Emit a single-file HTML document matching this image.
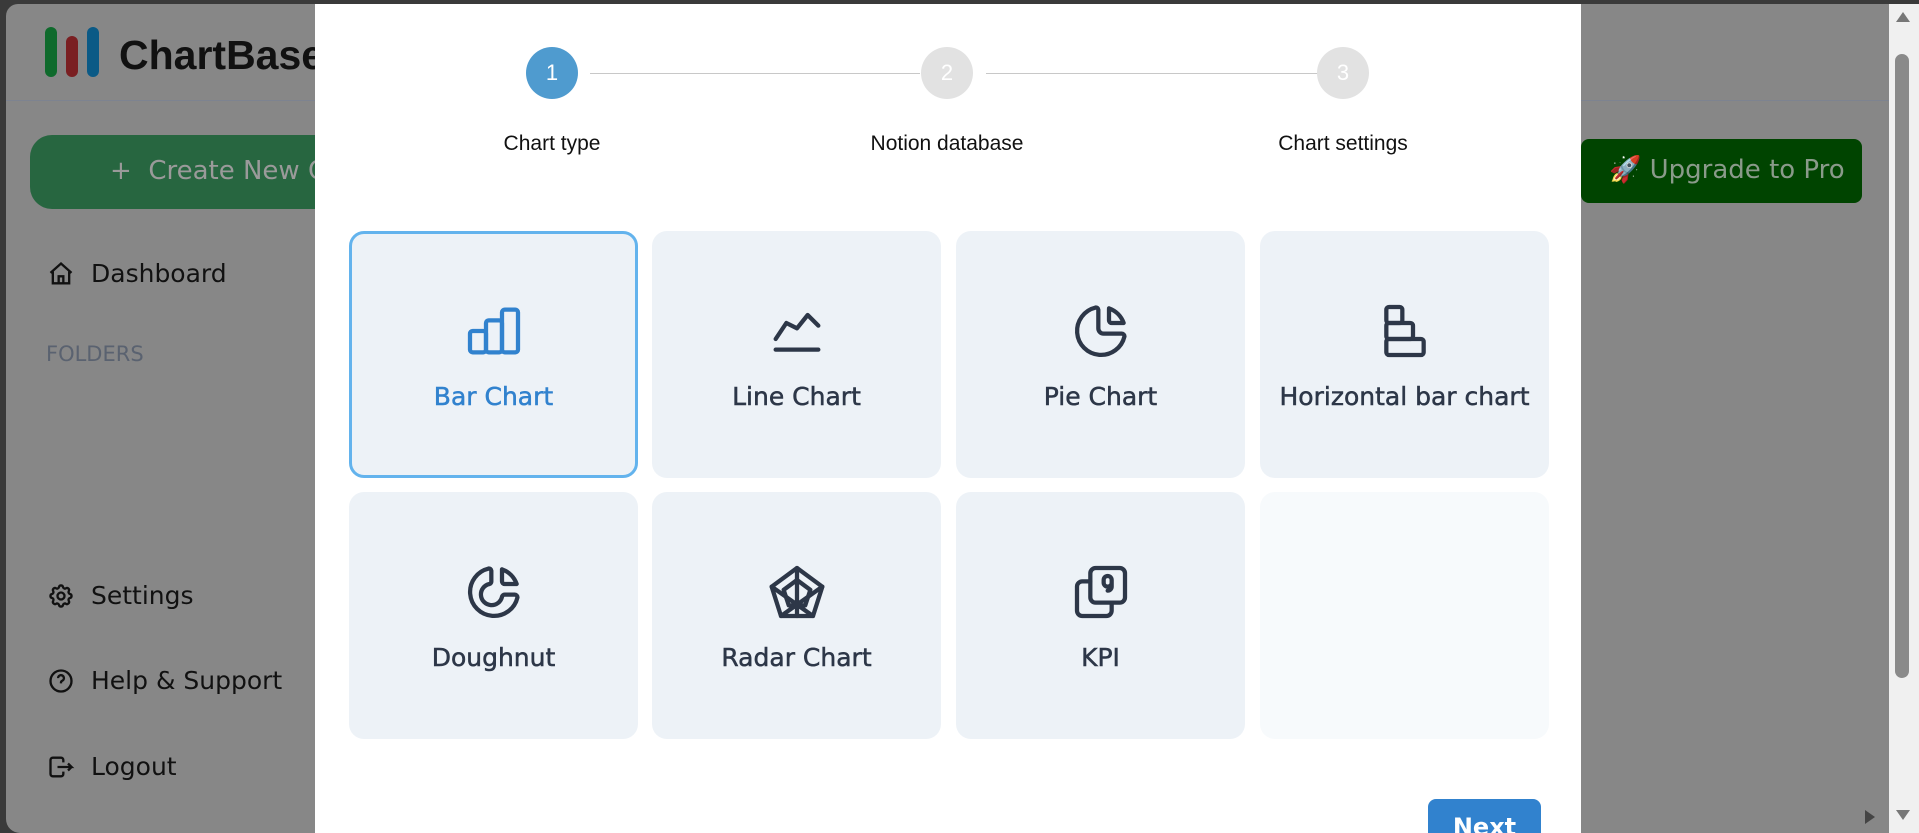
<!DOCTYPE html>
<html><head><meta charset="utf-8"><style>
*{box-sizing:border-box;margin:0;padding:0}
html,body{width:1919px;height:833px;overflow:hidden}
body{background:#3a3a3a;font-family:"Liberation Sans",sans-serif;position:relative}
.win{position:absolute;left:6px;top:4px;width:1883px;height:829px;background:#878787;border-radius:12px 0 0 14px;overflow:hidden}
.abs{position:absolute}
.side{font-family:"DejaVu Sans","Liberation Sans",sans-serif;color:#111;white-space:nowrap}
.nav{position:absolute;left:41px;display:flex;align-items:center;font-size:25px;color:#111}
.nav svg{margin-right:16px}
.modal{position:absolute;left:315px;top:4px;width:1266px;height:829px;background:#fff;overflow:hidden}
.step{position:absolute;width:52px;height:52px;border-radius:50%;color:#fff;font-size:22px;display:flex;align-items:center;justify-content:center}
.lbl{position:absolute;font-size:21px;color:#111;transform:translateX(-50%);white-space:nowrap}
.line{position:absolute;height:1px;background:#c8c8c8;top:69px}
.card{position:absolute;width:289px;height:247px;background:#edf2f7;border-radius:15px;display:flex;flex-direction:column;align-items:center;justify-content:center;color:#2d3748;font-family:"DejaVu Sans","Liberation Sans",sans-serif;font-size:25px;-webkit-text-stroke:0.5px currentColor;white-space:nowrap}
.card svg{width:64px;height:64px;margin-bottom:19px;margin-top:0px}
.sb{position:absolute;left:1889px;top:4px;width:30px;height:829px;background:#f0f0f0}
</style></head><body>
<div class="win">
  <div class="abs" style="left:39px;top:23px;width:12px;height:50px;border-radius:6px;background:#0f6a2c"></div>
  <div class="abs" style="left:60px;top:32px;width:12px;height:41px;border-radius:6px;background:#7a1f22"></div>
  <div class="abs" style="left:81px;top:23px;width:12px;height:50px;border-radius:6px;background:#0b5a86"></div>
  <div class="abs" style="left:113px;top:28px;font-size:41px;font-weight:bold;color:#111;font-family:'Liberation Sans',sans-serif">ChartBase</div>
  <div class="abs" style="left:0;top:96px;width:1883px;height:1px;background:#7d8390"></div>
  <div class="abs side" style="left:24px;top:131px;width:320px;height:74px;border-radius:22px;background:#276640;color:#9a9a9a;font-size:26px;padding:21px 0 0 80px">+&nbsp; Create New Chart</div>
  <div class="abs side" style="left:1575px;top:135px;width:281px;height:64px;border-radius:8px;background:#004400;color:#8a9a8a;font-size:26px;padding:16px 0 0 28px">🚀 Upgrade to Pro</div>
  <div class="nav side" style="top:255px"><svg width="28" height="28" viewBox="0 0 24 24" fill="none" stroke="#111" stroke-width="2"><path d="M3 11 12 3l9 8M5 10v10h14V10M10 20v-6h4v6"/></svg>Dashboard</div>
  <div class="abs side" style="left:40px;top:338px;font-size:21px;color:#5a6270">FOLDERS</div>
  <div class="nav side" style="top:577px"><svg width="28" height="28" viewBox="0 0 24 24" fill="none" stroke="#111" stroke-width="2"><circle cx="12" cy="12" r="3"/><path d="M10.3 4.3c.4-1.8 3-1.8 3.4 0a1.7 1.7 0 0 0 2.6 1.1c1.5-.9 3.3.8 2.4 2.4a1.7 1.7 0 0 0 1 2.5c1.8.4 1.8 3 0 3.4a1.7 1.7 0 0 0-1 2.6c.9 1.5-.9 3.3-2.4 2.4a1.7 1.7 0 0 0-2.6 1c-.4 1.8-3 1.8-3.4 0a1.7 1.7 0 0 0-2.6-1c-1.5.9-3.3-.9-2.4-2.4a1.7 1.7 0 0 0-1-2.6c-1.8-.4-1.8-3 0-3.4a1.7 1.7 0 0 0 1-2.5c-.9-1.6.9-3.3 2.4-2.4a1.7 1.7 0 0 0 2.6-1.1z"/></svg>Settings</div>
  <div class="nav side" style="top:662px"><svg width="28" height="28" viewBox="0 0 24 24" fill="none" stroke="#111" stroke-width="2"><circle cx="12" cy="12" r="9"/><path d="M9.5 9.5a2.5 2.5 0 1 1 3.5 2.3c-.6.3-1 .8-1 1.5v.7M12 17v.01"/></svg>Help &amp; Support</div>
  <div class="nav side" style="top:748px"><svg width="28" height="28" viewBox="0 0 24 24" fill="none" stroke="#111" stroke-width="2"><path d="M14 8V6a2 2 0 0 0-2-2H5a2 2 0 0 0-2 2v12a2 2 0 0 0 2 2h7a2 2 0 0 0 2-2v-2M9 12h12l-3-3m0 6 3-3"/></svg>Logout</div>
</div>
<div class="modal">
  <div class="line" style="left:275px;width:330px"></div>
  <div class="line" style="left:671px;width:333px"></div>
  <div class="step" style="left:211px;top:43px;background:#4f9bcf">1</div>
  <div class="step" style="left:606px;top:43px;background:#e2e2e2">2</div>
  <div class="step" style="left:1002px;top:43px;background:#e2e2e2">3</div>
  <div class="lbl" style="left:237px;top:128px">Chart type</div>
  <div class="lbl" style="left:632px;top:128px">Notion database</div>
  <div class="lbl" style="left:1028px;top:128px">Chart settings</div>

  <div class="card" style="left:34px;top:227px;border:3px solid #63b3ed;color:#3182ce"><svg viewBox="0 0 24 24" fill="none" stroke="#3182ce" stroke-width="1.6" stroke-linejoin="round"><rect x="3" y="12" width="6" height="8" rx="1"/><rect x="9" y="8" width="6" height="12" rx="1"/><rect x="15" y="4" width="6" height="16" rx="1"/></svg>Bar Chart</div>
  <div class="card" style="left:337px;top:227px"><svg viewBox="0 0 24 24" fill="none" stroke="#2d3748" stroke-width="1.6" stroke-linecap="round" stroke-linejoin="round"><path d="M4 19h16M4 15l4-6 4 2 4-5 4 4"/></svg>Line Chart</div>
  <div class="card" style="left:641px;top:227px"><svg viewBox="0 0 24 24" fill="none" stroke="#2d3748" stroke-width="1.6" stroke-linecap="round" stroke-linejoin="round"><path d="M10 3.2A9 9 0 1 0 20.8 14a1 1 0 0 0-1-1H13a2 2 0 0 1-2-2V4a.9.9 0 0 0-1-.8"/><path d="M15 3.5A9 9 0 0 1 20.5 9H16a1 1 0 0 1-1-1V3.5"/></svg>Pie Chart</div>
  <div class="card" style="left:945px;top:227px"><svg viewBox="0 0 24 24" fill="none" stroke="#2d3748" stroke-width="1.6" stroke-linejoin="round"><rect x="5" y="3" width="6" height="6" rx="1"/><rect x="5" y="9" width="10" height="6" rx="1"/><rect x="5" y="15" width="14" height="6" rx="1"/></svg>Horizontal bar chart</div>

  <div class="card" style="left:34px;top:488px"><svg viewBox="0 0 24 24" fill="none" stroke="#2d3748" stroke-width="1.6" stroke-linecap="round" stroke-linejoin="round"><path d="M10 3.2A9 9 0 1 0 20.8 14a1 1 0 0 0-1-1h-3.8a1 1 0 0 0-1 .8 4 4 0 1 1-4.7-4.8 1 1 0 0 0 .7-1V4a.9.9 0 0 0-1-.8"/><path d="M15 3.5A9 9 0 0 1 20.5 9H16a1 1 0 0 1-1-1V3.5"/></svg>Doughnut</div>
  <div class="card" style="left:337px;top:488px"><svg viewBox="0 0 24 24" fill="none" stroke="#2d3748" stroke-width="1.6" stroke-linecap="round" stroke-linejoin="round"><path d="M12 3l9.5 7-3.5 11H6L2.5 10z"/><path d="M12 7.5l5 3.7-1.9 5.8H8.9L7 11.2z"/><path d="M12 3v18M2.5 10l15.5 11M21.5 10L6 21"/></svg>Radar Chart</div>
  <div class="card" style="left:641px;top:488px"><svg viewBox="0 0 24 24" fill="none" stroke="#2d3748" stroke-width="1.6" stroke-linecap="round" stroke-linejoin="round"><rect x="8" y="3" width="13" height="13" rx="2"/><path d="M16 16v3a2 2 0 0 1-2 2H5a2 2 0 0 1-2-2v-9a2 2 0 0 1 2-2h3"/><path d="M14.5 11.5a1.5 1.5 0 0 0 1.5-1.5V7.5a1.5 1.5 0 0 0-3 0v1a1.5 1.5 0 0 0 3 0"/></svg>KPI</div>
  <div class="card" style="left:945px;top:488px;background:#f7fafc"></div>

  <div class="abs" style="left:1113px;top:795px;width:113px;height:50px;border-radius:8px;background:#3182ce;color:#fff;font-family:'DejaVu Sans',sans-serif;font-weight:bold;font-size:24px;text-align:center;padding-top:14px">Next</div>
</div>
<div class="sb">
  <div class="abs" style="left:6px;top:50px;width:14px;height:624px;border-radius:7px;background:#8a8a8a"></div>
  <div class="abs" style="left:7px;top:8px;width:0;height:0;border-left:7px solid transparent;border-right:7px solid transparent;border-bottom:10px solid #777"></div>
  <div class="abs" style="left:7px;top:806px;width:0;height:0;border-left:7px solid transparent;border-right:7px solid transparent;border-top:10px solid #777"></div>
</div>
<div class="abs" style="left:1865px;top:810px;width:0;height:0;border-top:7px solid transparent;border-bottom:7px solid transparent;border-left:10px solid #444"></div>
</body></html>
